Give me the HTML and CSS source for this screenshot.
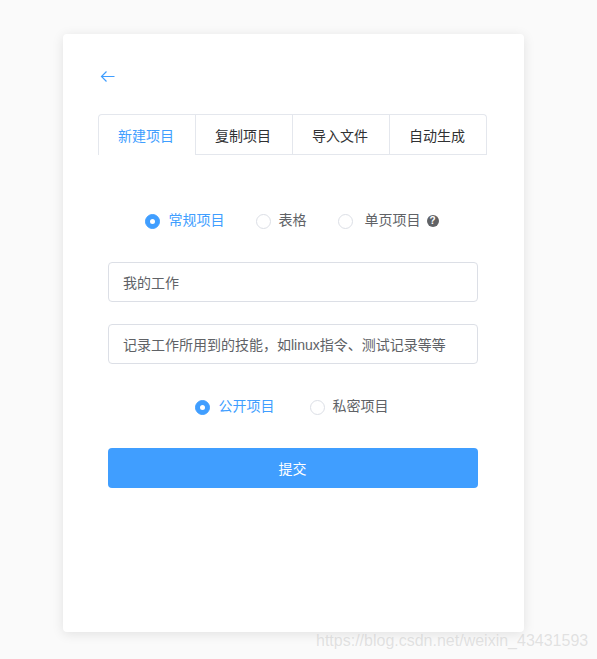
FILE: index.html
```html
<!DOCTYPE html>
<html lang="zh-CN">
<head>
<meta charset="utf-8">
<title>新建项目</title>
<link rel="stylesheet" href="styles.css">
</head>
<body>
<main class="card">
  <a class="back" href="#" aria-label="返回">
    <svg width="16" height="16" viewBox="0 0 16 16" fill="none" stroke="#409eff" stroke-width="1.2"><path d="M1.5 8.5H14.5M6.5 3.5 1.5 8.5 6.5 13.5"/></svg>
  </a>
  <nav class="tabs">
    <div class="tab active">新建项目</div>
    <div class="tab">复制项目</div>
    <div class="tab">导入文件</div>
    <div class="tab">自动生成</div>
  </nav>
  <form class="form">
    <div class="radios type-row">
      <label class="radio checked"><span class="dot"></span>常规项目</label>
      <label class="radio"><span class="dot"></span>表格</label>
      <label class="radio wide"><span class="dot"></span>单页项目<span class="help">?</span></label>
    </div>
    <input class="input" type="text" value="我的工作">
    <input class="input" type="text" value="记录工作所用到的技能，如linux指令、测试记录等等">
    <div class="radios vis-row">
      <label class="radio checked"><span class="dot"></span>公开项目</label>
      <label class="radio"><span class="dot"></span>私密项目</label>
    </div>
    <button class="submit" type="button">提交</button>
  </form>
</main>
<div class="watermark">https://blog.csdn.net/weixin_43431593</div>
</body>
</html>
```
FILE: styles.css
```css
* { box-sizing: border-box; }
html, body { margin: 0; height: 100%; }
body {
  background: #fafafa;
  font-family: "Liberation Sans", "Noto Sans CJK SC", sans-serif;
  font-size: 14px;
  color: #606266;
  padding: 34px 73px 27px 63px;
  overflow: hidden;
  position: relative;
}
.card {
  width: 461px;
  height: 598px;
  background: #fff;
  border-radius: 4px;
  box-shadow: 0 2px 12px rgba(0, 0, 0, .1);
  padding: 34px 37px 0 35px;
}
.back { display: block; width: 16px; height: 16px; margin-left: 2px; }
.back svg { display: block; }
.tabs {
  display: flex;
  margin-top: 30px;
  width: 389px;
  height: 41px;
  border-bottom: 1px solid #e4e7ed;
}
.tab {
  width: 97px;
  height: 40px;
  line-height: 43px;
  padding-right: 2px;
  text-align: center;
  color: #303133;
  border: 1px solid #e4e7ed;
  border-left: 0;
  border-bottom: 0;
  white-space: nowrap;
}
.tab:last-child { border-top-right-radius: 4px; }
.tab.active {
  width: 98px;
  height: 41px;
  color: #409eff;
  border-left: 1px solid #e4e7ed;
  border-top-left-radius: 4px;
  background: #fff;
}
.form { width: 370px; margin-left: 10px; display: flex; flex-direction: column; }
.radios { display: flex; justify-content: center; line-height: 20px; }
.type-row { margin: 55px 0 32px -3px; gap: 31px; }
.vis-row { margin: 32px 0 32px -3px; gap: 35px; }
.radio { display: flex; align-items: center; white-space: nowrap; }
.radio.checked { color: #409eff; }
.dot {
  width: 15px;
  height: 15px;
  border-radius: 50%;
  border: 1px solid #dcdfe6;
  background: #fff;
  margin: 2px 8px 0 0;
  position: relative;
  flex: none;
}
.checked .dot { background: #409eff; border-color: #409eff; margin-right: 9px; }
.wide .dot { margin-right: 12px; }
.checked .dot::after {
  content: "";
  position: absolute;
  left: 4px;
  top: 4px;
  width: 5px;
  height: 5px;
  border-radius: 50%;
  background: #fff;
}
.help {
  width: 12px;
  height: 12px;
  border-radius: 50%;
  background: #606266;
  color: #fff;
  font: bold 10px/12px "Liberation Sans", sans-serif;
  text-align: center;
  margin: 2px 0 0 6px;
}
.input {
  display: block;
  width: 370px;
  height: 40px;
  padding: 0 14px;
  border: 1px solid #dcdfe6;
  border-radius: 4px;
  font: inherit;
  color: #606266;
  background: #fff;
  outline: 0;
}
.input + .input { margin-top: 22px; }
.submit {
  display: block;
  width: 370px;
  height: 40px;
  border: 0;
  border-radius: 4px;
  background: #409eff;
  color: #fff;
  font: inherit;
  padding: 0 1px 0 0;
}
.watermark {
  position: absolute;
  left: 316px;
  top: 630px;
  font: 16px/22px "Liberation Sans", sans-serif;
  color: rgba(190, 190, 190, .42);
  white-space: nowrap;
}
```
